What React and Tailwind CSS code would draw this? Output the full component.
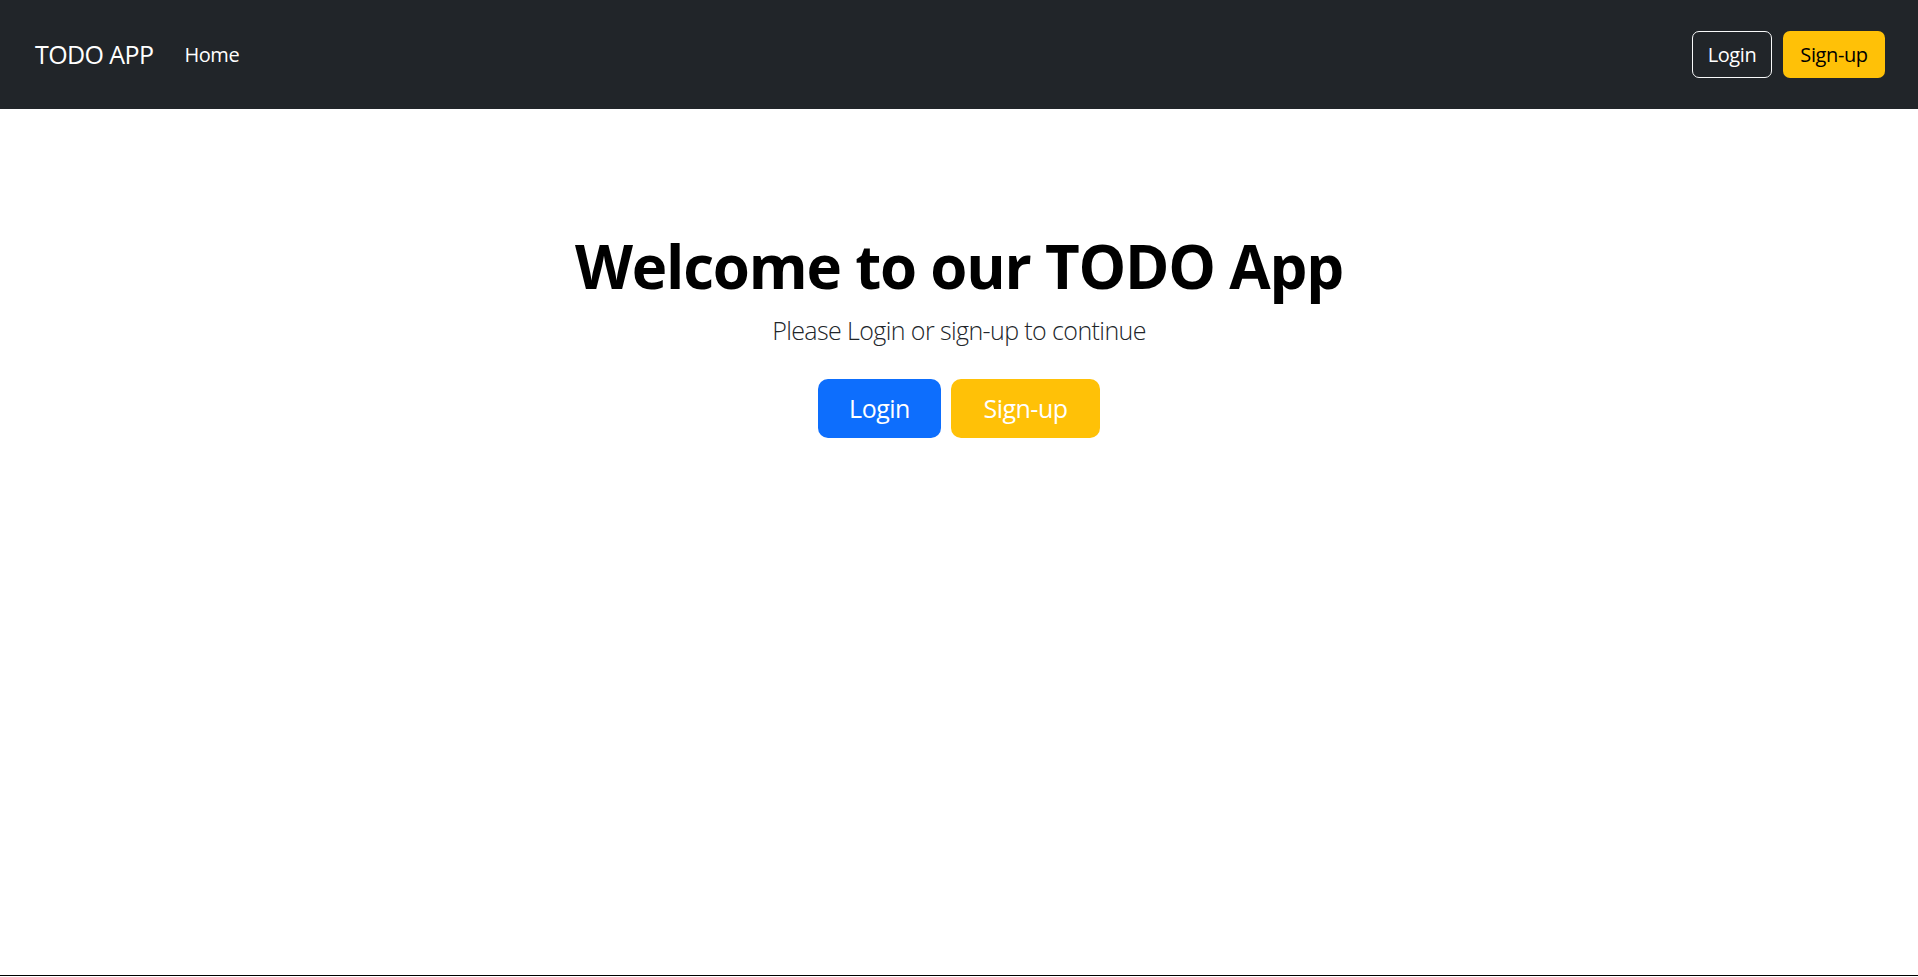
import { useState } from 'react';

export default function App() {
  const [hovered, setHovered] = useState(null);

  return (
    <div
      className="h-[976px] border-b border-black bg-white flex flex-col"
      style={{ fontFamily: '"Open Sans", "Noto Sans", sans-serif' }}
    >
      {/* top navbar */}
      <nav className="h-[109px] bg-[#212529] flex items-center justify-between pl-[35px] pr-[33px]">
        <div className="flex items-center">
          <a href="#" className="text-[25px] leading-[37px] tracking-[-0.6px] text-white mr-[31px]">TODO APP</a>
          <a href="#" className="text-[20px] leading-[30px] tracking-[-0.4px] text-white">Home</a>
        </div>
        <div className="flex items-center gap-[11px]">
          <button
            onMouseEnter={() => setHovered('login')}
            onMouseLeave={() => setHovered(null)}
            className="h-[47px] w-[80px] rounded-[7px] border border-[#f8f9fa] text-white text-[20px] tracking-[-0.4px]"
          >
            Login
          </button>
          <button className="h-[47px] w-[102px] rounded-[7px] bg-[#ffc107] text-black text-[20px] tracking-[-0.4px]">
            Sign-up
          </button>
        </div>
      </nav>

      {/* hero */}
      <main className="flex flex-col items-center pt-[121px] text-[#212529]">
        <h1 className="text-[60px] leading-[72px] font-bold tracking-[-1.2px] text-black mb-[10px]">Welcome to our TODO App</h1>
        <p className="text-[25px] leading-[37px] font-light tracking-[-0.6px] mb-[30px]">Please Login or sign-up to continue</p>
        <div className="flex gap-[10px]">
          <button className="h-[59px] w-[123px] rounded-[10px] bg-[#0d6efd] text-white text-[25px] tracking-[-0.5px]">Login</button>
          <button className="h-[59px] w-[149px] rounded-[10px] bg-[#ffc107] text-white text-[25px] tracking-[-0.5px]">Sign-up</button>
        </div>
      </main>
    </div>
  );
}
